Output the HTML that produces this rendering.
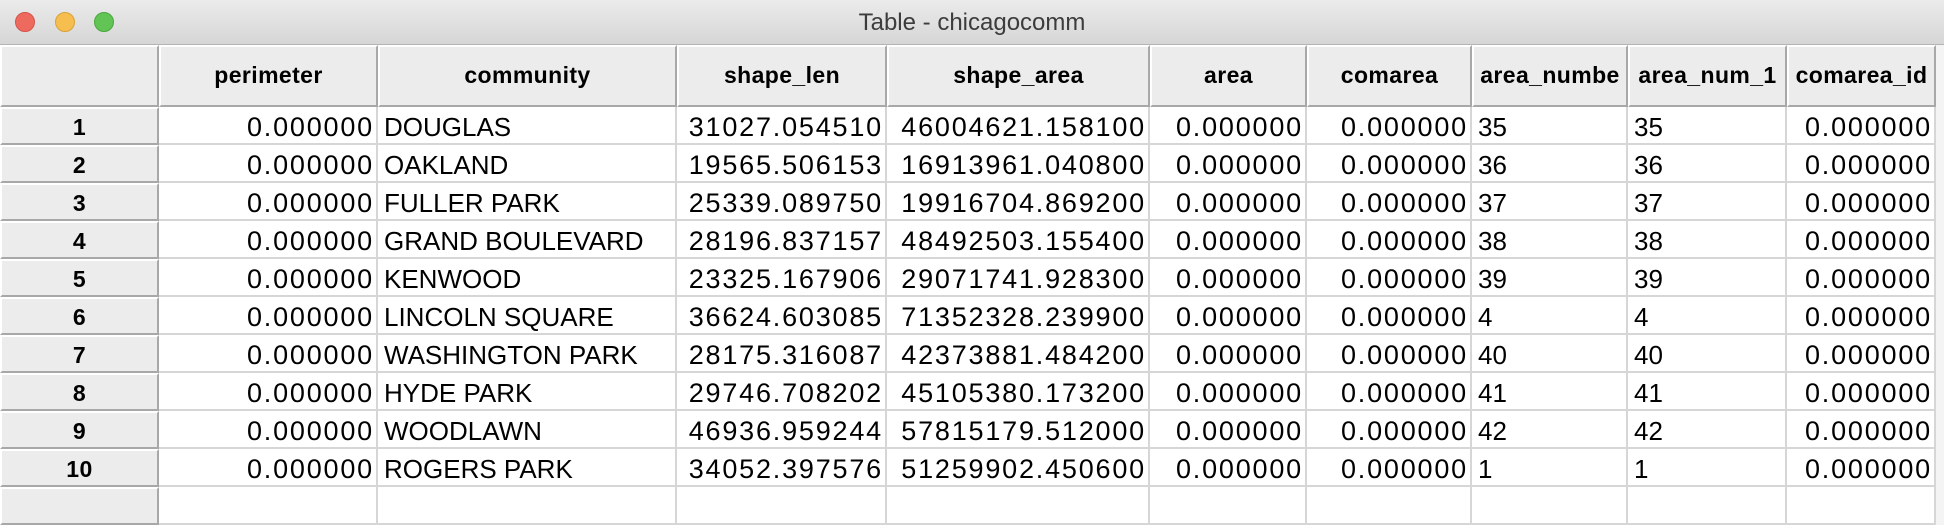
<!DOCTYPE html>
<html><head><meta charset="utf-8"><style>
*{box-sizing:border-box;margin:0;padding:0}
body{width:1944px;height:496px;overflow:hidden;background:#fff;font-family:"Liberation Sans",Arial,sans-serif;position:relative}
.tb{position:absolute;left:0;top:0;width:1944px;height:45px;background:linear-gradient(#ebebeb,#d6d6d6);border-bottom:1px solid #b4b4b4}
.tb .t{position:absolute;left:0;right:0;top:9px;text-align:center;font-size:24px;color:#3c3c3c}
.dot{position:absolute;top:12px;width:20px;height:20px;border-radius:50%}
.grid{position:absolute;left:0;top:45px;width:1944px}
.r{display:flex;height:38px}
.r.h{height:62px}
.c{height:100%;border-right:2px solid #d6d6d6;border-bottom:2px solid #d6d6d6;font-size:26px;letter-spacing:0;color:#000;line-height:40px;white-space:nowrap;overflow:hidden;padding:0 2px 0 6px}
.c.n{text-align:right;letter-spacing:1.8px;padding-right:2px;font-size:27px}
.h .c,.c.rh{background:#ececec;border-right:2px solid #a8a8a8;border-bottom:2px solid #a8a8a8;border-left:2px solid #fff;border-top:2px solid #fff;font-weight:bold;text-align:center;font-size:23px;letter-spacing:0.4px;padding:0}
.h .c{line-height:56px}
.c.rh{line-height:36px}
.w0{width:159px}.w1{width:219px}.w2{width:299px}.w3{width:210px}.w4{width:263px}.w5{width:157px}.w6{width:165px}.w7{width:156px}.w8{width:159px}.w9{width:149px}
.pad{flex:1;background:#f4f4f4}
</style></head><body>
<div class="tb">
<div class="dot" style="left:15px;background:#ee6a5f;border:1px solid #d4544a"></div>
<div class="dot" style="left:55px;background:#f5be4f;border:1px solid #d9a23b"></div>
<div class="dot" style="left:94px;background:#61c454;border:1px solid #4aa83e"></div>
<div class="t">Table - chicagocomm</div>
</div>
<div class="grid">
<div class="r h"><div class="c w0"></div><div class="c w1">perimeter</div><div class="c w2">community</div><div class="c w3">shape_len</div><div class="c w4">shape_area</div><div class="c w5">area</div><div class="c w6">comarea</div><div class="c w7">area_numbe</div><div class="c w8">area_num_1</div><div class="c w9">comarea_id</div><div class="pad"></div></div>
<div class="r"><div class="c rh w0">1</div><div class="c n w1">0.000000</div><div class="c w2">DOUGLAS</div><div class="c n w3">31027.054510</div><div class="c n w4">46004621.158100</div><div class="c n w5">0.000000</div><div class="c n w6">0.000000</div><div class="c w7">35</div><div class="c w8">35</div><div class="c n w9">0.000000</div><div class="pad"></div></div>
<div class="r"><div class="c rh w0">2</div><div class="c n w1">0.000000</div><div class="c w2">OAKLAND</div><div class="c n w3">19565.506153</div><div class="c n w4">16913961.040800</div><div class="c n w5">0.000000</div><div class="c n w6">0.000000</div><div class="c w7">36</div><div class="c w8">36</div><div class="c n w9">0.000000</div><div class="pad"></div></div>
<div class="r"><div class="c rh w0">3</div><div class="c n w1">0.000000</div><div class="c w2">FULLER PARK</div><div class="c n w3">25339.089750</div><div class="c n w4">19916704.869200</div><div class="c n w5">0.000000</div><div class="c n w6">0.000000</div><div class="c w7">37</div><div class="c w8">37</div><div class="c n w9">0.000000</div><div class="pad"></div></div>
<div class="r"><div class="c rh w0">4</div><div class="c n w1">0.000000</div><div class="c w2">GRAND BOULEVARD</div><div class="c n w3">28196.837157</div><div class="c n w4">48492503.155400</div><div class="c n w5">0.000000</div><div class="c n w6">0.000000</div><div class="c w7">38</div><div class="c w8">38</div><div class="c n w9">0.000000</div><div class="pad"></div></div>
<div class="r"><div class="c rh w0">5</div><div class="c n w1">0.000000</div><div class="c w2">KENWOOD</div><div class="c n w3">23325.167906</div><div class="c n w4">29071741.928300</div><div class="c n w5">0.000000</div><div class="c n w6">0.000000</div><div class="c w7">39</div><div class="c w8">39</div><div class="c n w9">0.000000</div><div class="pad"></div></div>
<div class="r"><div class="c rh w0">6</div><div class="c n w1">0.000000</div><div class="c w2">LINCOLN SQUARE</div><div class="c n w3">36624.603085</div><div class="c n w4">71352328.239900</div><div class="c n w5">0.000000</div><div class="c n w6">0.000000</div><div class="c w7">4</div><div class="c w8">4</div><div class="c n w9">0.000000</div><div class="pad"></div></div>
<div class="r"><div class="c rh w0">7</div><div class="c n w1">0.000000</div><div class="c w2">WASHINGTON PARK</div><div class="c n w3">28175.316087</div><div class="c n w4">42373881.484200</div><div class="c n w5">0.000000</div><div class="c n w6">0.000000</div><div class="c w7">40</div><div class="c w8">40</div><div class="c n w9">0.000000</div><div class="pad"></div></div>
<div class="r"><div class="c rh w0">8</div><div class="c n w1">0.000000</div><div class="c w2">HYDE PARK</div><div class="c n w3">29746.708202</div><div class="c n w4">45105380.173200</div><div class="c n w5">0.000000</div><div class="c n w6">0.000000</div><div class="c w7">41</div><div class="c w8">41</div><div class="c n w9">0.000000</div><div class="pad"></div></div>
<div class="r"><div class="c rh w0">9</div><div class="c n w1">0.000000</div><div class="c w2">WOODLAWN</div><div class="c n w3">46936.959244</div><div class="c n w4">57815179.512000</div><div class="c n w5">0.000000</div><div class="c n w6">0.000000</div><div class="c w7">42</div><div class="c w8">42</div><div class="c n w9">0.000000</div><div class="pad"></div></div>
<div class="r"><div class="c rh w0">10</div><div class="c n w1">0.000000</div><div class="c w2">ROGERS PARK</div><div class="c n w3">34052.397576</div><div class="c n w4">51259902.450600</div><div class="c n w5">0.000000</div><div class="c n w6">0.000000</div><div class="c w7">1</div><div class="c w8">1</div><div class="c n w9">0.000000</div><div class="pad"></div></div>
<div class="r"><div class="c rh w0"></div><div class="c w1"></div><div class="c w2"></div><div class="c w3"></div><div class="c w4"></div><div class="c w5"></div><div class="c w6"></div><div class="c w7"></div><div class="c w8"></div><div class="c w9"></div><div class="pad"></div></div>
</div>
</body></html>
